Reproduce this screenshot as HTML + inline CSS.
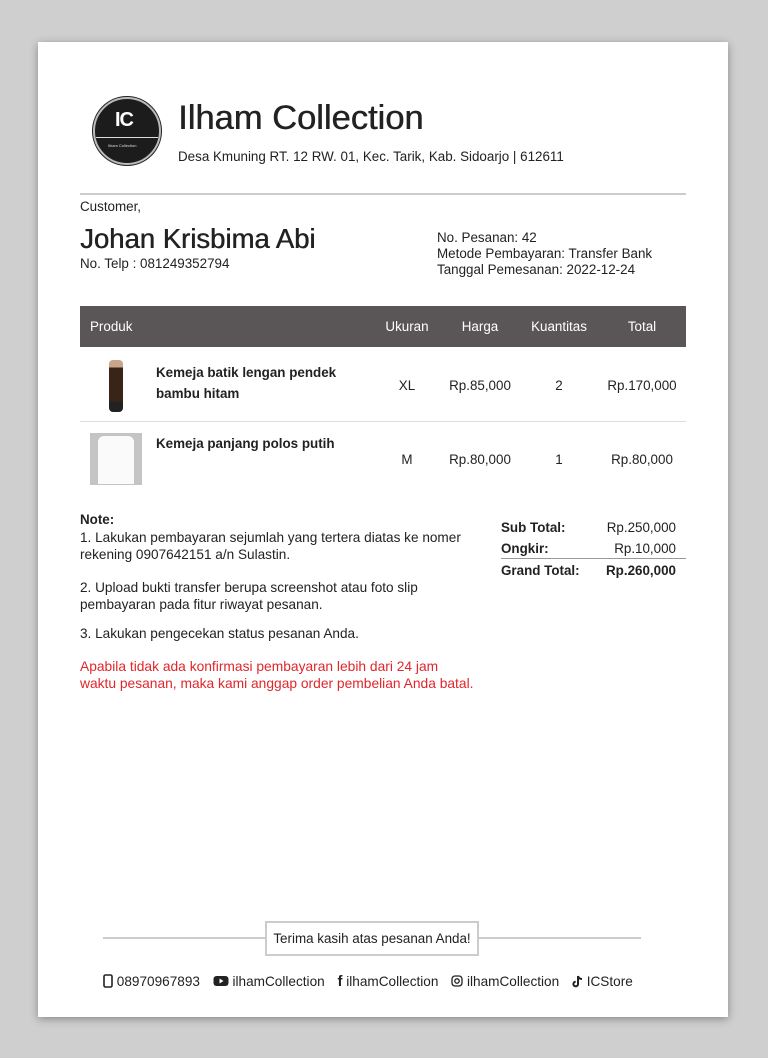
<!DOCTYPE html>
<html><head><meta charset="utf-8"><style>
*{margin:0;padding:0;box-sizing:border-box}
body{width:768px;height:1058px;background:#cfcfcf;font-family:"Liberation Sans",sans-serif;color:#222;position:relative;overflow:hidden}
.sheet{position:absolute;left:38px;top:42px;width:690px;height:975px;background:#fff;box-shadow:0 2px 8px rgba(0,0,0,.35)}
.a{position:absolute;white-space:nowrap}
.s{font-size:13.4px;line-height:16px}
.c{transform:translateX(-50%)}
.r{transform:translateX(-100%)}
.ft span{margin-right:9px}
</style></head><body>
<div class="sheet"></div>
<div class="a" style="left:93px;top:97px;width:68px;height:68px;border-radius:50%;background:#1c1c1c;border:2px solid #bbb;box-shadow:0 0 0 1px #222"></div>
<div class="a" style="left:115px;top:109px;color:#fff;font-weight:bold;font-size:20px;letter-spacing:-1px">IC</div>
<div class="a" style="left:96px;top:137px;width:62px;height:1px;background:#ddd"></div>
<div class="a" style="left:108px;top:143px;color:#ddd;font-size:4px">Ilham Collection</div>
<div class="a" style="left:178px;top:98px;font-size:34.5px;line-height:40px;color:#222;text-shadow:0.5px 0 0 #222">Ilham Collection</div>
<div class="a s" style="left:178px;top:149px">Desa Kmuning RT. 12 RW. 01, Kec. Tarik, Kab. Sidoarjo | 612611</div>
<div class="a" style="left:80px;top:193px;width:606px;height:2px;background:#ccc"></div>
<div class="a s" style="left:80px;top:199px">Customer,</div>
<div class="a" style="left:80px;top:223px;font-size:27.5px;line-height:32px;text-shadow:0.5px 0 0 #222">Johan Krisbima Abi</div>
<div class="a s" style="left:80px;top:256px">No. Telp : 081249352794</div>
<div class="a s" style="left:437px;top:230px">No. Pesanan: 42</div>
<div class="a s" style="left:437px;top:246px">Metode Pembayaran: Transfer Bank</div>
<div class="a s" style="left:437px;top:262px">Tanggal Pemesanan: 2022-12-24</div>
<div class="a" style="left:80px;top:306px;width:606px;height:41px;background:#5a5657"></div>
<div class="a s" style="left:90px;top:319px;color:#fff">Produk</div>
<div class="a s c" style="left:407px;top:319px;color:#fff">Ukuran</div>
<div class="a s c" style="left:480px;top:319px;color:#fff">Harga</div>
<div class="a s c" style="left:559px;top:319px;color:#fff">Kuantitas</div>
<div class="a s c" style="left:642px;top:319px;color:#fff">Total</div>
<div class="a" style="left:109px;top:360px;width:14px;height:52px;background:linear-gradient(#c9a58a 0 14%,#3a2418 14% 80%,#222 80%);border-radius:4px"></div>
<div class="a s" style="left:156px;top:362px;font-weight:bold;line-height:21px">Kemeja batik lengan pendek<br>bambu hitam</div>
<div class="a s c" style="left:407px;top:378px">XL</div>
<div class="a s c" style="left:480px;top:378px">Rp.85,000</div>
<div class="a s c" style="left:559px;top:378px">2</div>
<div class="a s c" style="left:642px;top:378px">Rp.170,000</div>
<div class="a" style="left:80px;top:421px;width:606px;height:1px;background:#ddd"></div>
<div class="a" style="left:90px;top:433px;width:52px;height:52px;background:#c4c4c4"></div>
<div class="a" style="left:98px;top:436px;width:36px;height:48px;background:#fafafa;border-radius:6px 6px 0 0"></div>
<div class="a s" style="left:156px;top:436px;font-weight:bold">Kemeja panjang polos putih</div>
<div class="a s c" style="left:407px;top:452px">M</div>
<div class="a s c" style="left:480px;top:452px">Rp.80,000</div>
<div class="a s c" style="left:559px;top:452px">1</div>
<div class="a s c" style="left:642px;top:452px">Rp.80,000</div>
<div class="a s" style="left:80px;top:512px;font-weight:bold">Note:</div>
<div class="a s" style="left:80px;top:529px;line-height:17px;font-size:13.6px">1. Lakukan pembayaran sejumlah yang tertera diatas ke nomer<br>rekening 0907642151 a/n Sulastin.</div>
<div class="a s" style="left:80px;top:579px;line-height:17px;font-size:13.6px">2. Upload bukti transfer berupa screenshot atau foto slip<br>pembayaran pada fitur riwayat pesanan.</div>
<div class="a s" style="left:80px;top:626px;font-size:13.6px">3. Lakukan pengecekan status pesanan Anda.</div>
<div class="a s" style="left:80px;top:658px;line-height:17px;color:#e0262b;font-size:13.8px">Apabila tidak ada konfirmasi pembayaran lebih dari 24 jam<br>waktu pesanan, maka kami anggap order pembelian Anda batal.</div>
<div class="a s" style="left:501px;top:520px;font-weight:bold">Sub Total:</div>
<div class="a s r" style="left:676px;top:520px">Rp.250,000</div>
<div class="a s" style="left:501px;top:541px;font-weight:bold">Ongkir:</div>
<div class="a s r" style="left:676px;top:541px">Rp.10,000</div>
<div class="a" style="left:501px;top:558px;width:185px;height:1px;background:#999"></div>
<div class="a s" style="left:501px;top:563px;font-weight:bold">Grand Total:</div>
<div class="a s r" style="left:676px;top:563px;font-weight:bold">Rp.260,000</div>
<div class="a" style="left:103px;top:937px;width:538px;height:2px;background:#ccc"></div>
<div class="a" style="left:265px;top:921px;width:214px;height:35px;background:#fff;border:2px solid #ccc"></div>
<div class="a s c" style="left:372px;top:931px">Terima kasih atas pesanan Anda!</div>
<div class="a s ft" style="left:103px;top:974px;font-size:13.6px">
<span><svg width="10" height="14" viewBox="0 0 10 14" style="vertical-align:-2px"><rect x="1" y="1" width="8" height="12" rx="1.5" fill="none" stroke="#222" stroke-width="1.6"/></svg> 08970967893</span>
<span><svg width="16" height="12" viewBox="0 0 16 12" style="vertical-align:-1px"><rect x="0.5" y="1" width="15" height="10" rx="3" fill="#222"/><path d="M6.5 3.5L10.5 6 6.5 8.5z" fill="#fff"/></svg> ilhamCollection</span>
<span><b style="font-size:15px">f</b> ilhamCollection</span>
<span><svg width="12" height="12" viewBox="0 0 12 12" style="vertical-align:-1px"><rect x="1" y="1" width="10" height="10" rx="3" fill="none" stroke="#222" stroke-width="1.3"/><circle cx="6" cy="6" r="2.2" fill="none" stroke="#222" stroke-width="1.3"/></svg> ilhamCollection</span>
<svg width="11" height="13" viewBox="0 0 11 13" style="vertical-align:-2px"><path d="M6 1v8a2.3 2.3 0 1 1-2.3-2.3M6 1c0.5 2 2 3 4 3" fill="none" stroke="#222" stroke-width="2"/></svg> ICStore</div>
</body></html>
